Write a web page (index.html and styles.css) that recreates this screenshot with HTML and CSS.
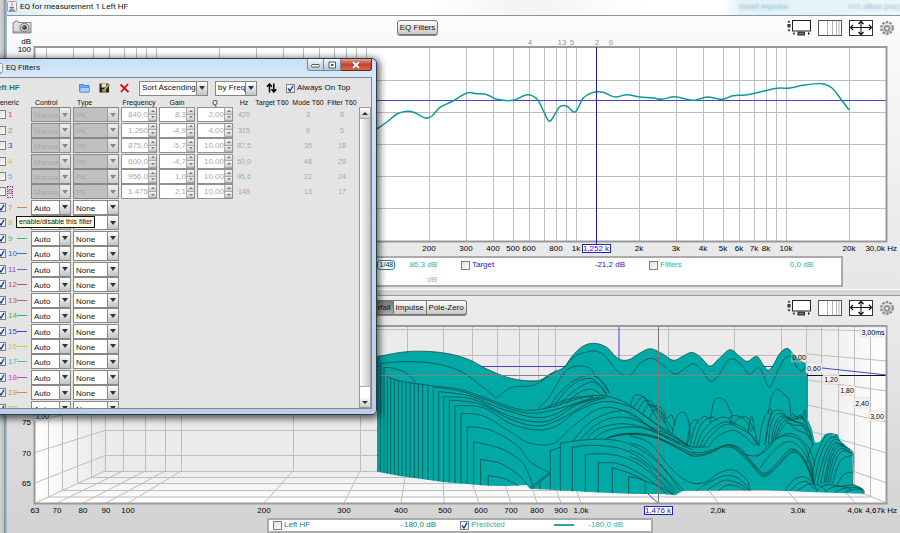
FILE: index.html
```html
<!DOCTYPE html>
<html lang="en">
<head>
    <meta charset="UTF-8">
    <meta name="viewport" content="width=device-width, initial-scale=1.0">
    <title>EQ for measurement 1 Left HF</title>
    <link rel="stylesheet" href="styles.css">
</head>
<body>
    <svg class="symbols" aria-hidden="true">
        <defs>
            <linearGradient id="metal" x1="0" y1="0" x2="0" y2="1">
                <stop offset="0" stop-color="#f4f4f4"/>
                <stop offset="1" stop-color="#a8a8a8"/>
            </linearGradient>
            <linearGradient id="wall-left"><stop offset="0" stop-color="#fff"/><stop offset="1" stop-color="#e8e8e8"/></linearGradient>
            <linearGradient id="wall-right"><stop offset="0" stop-color="#e8e8e8"/><stop offset="1" stop-color="#fff"/></linearGradient>
            <linearGradient id="floor" x1="0" y1="0" x2="0" y2="1"><stop offset="0" stop-color="#ececec"/><stop offset="1" stop-color="#fff"/></linearGradient>
            <symbol id="java" viewBox="0 0 10 11">
                <rect x=".5" y=".5" width="9" height="10" rx="1" fill="#f3f1ee" stroke="#9aa3ab"/>
                <path d="M5.5 1.5C3.5 3 6.5 3.5 4.7 5.5" fill="none" stroke="#d8672b"/>
                <path d="M2.5 6.5h4.5M3 8h3.5M2 9.3h6" stroke="#4f7495" fill="none"/>
            </symbol>
            <symbol id="camera" viewBox="0 0 20 14">
                <path d="M1 2.5h2V1h3v1.500h13v10.500H1z" fill="url(#metal)" stroke="#8a8a8a"/>
                <rect x="2" y="4" width="5" height="7" fill="#ddd"/>
                <circle cx="12.500" cy="7.500" r="4.300" fill="#cfcfcf" stroke="#777"/>
                <circle cx="12.500" cy="7.500" r="2.200" fill="#333"/>
                <circle cx="12" cy="7" r=".8" fill="#bbb"/>
            </symbol>
            <symbol id="scrollbars" viewBox="0 0 24 16">
                <rect x="5.500" y=".5" width="18" height="10.500" fill="#fff" stroke="#222"/>
                <path d="M.5 2.500L2 .5 3.500 2.500zM.5 9.500L2 11.500 3.500 9.500z" fill="#111"/>
                <rect x=".5" y="4" width="3" height="3.500" fill="#333"/>
                <path d="M7.500 12l-2 1.500 2 1.500zM21 12l2 1.500-2 1.500z" fill="#111"/>
                <rect x="11" y="12.200" width="6.500" height="2.800" fill="#777" stroke="#222"/>
            </symbol>
            <symbol id="gridlines" viewBox="0 0 24 16">
                <rect x=".5" y=".5" width="23" height="15" fill="#fff" stroke="#555"/>
                <path d="M9.500 1v14M14.500 1v14M18.500 1v14M21 1v14" stroke="#b5b5b5" fill="none"/>
            </symbol>
            <symbol id="limits" viewBox="0 0 24 16">
                <rect x=".5" y=".5" width="23" height="15" fill="#fff" stroke="#333"/>
                <path d="M1.500 7.500h21M12 1.500v13" stroke="#111" fill="none"/>
                <path d="M4 5L1.500 7.500 4 10M20 5l2.500 2.500L20 10M9.500 4L12 1.500 14.500 4M9.500 12l2.500 2.500 2.500-2.500" fill="none" stroke="#111" stroke-width="1.300"/>
            </symbol>
            <symbol id="gear" viewBox="0 0 14 14">
                <circle cx="7" cy="7" r="5.900" fill="none" stroke="#808080" stroke-width="2" stroke-dasharray="2.400 1.310"/>
                <circle cx="7" cy="7" r="5.300" fill="#b4b4b4"/>
                <circle cx="7" cy="7" r="4.500" fill="url(#metal)"/>
                <circle cx="7" cy="7" r="2.600" fill="#9c9c9c" stroke="#7c7c7c" stroke-width=".7"/>
                <circle cx="7" cy="7.500" r="1.300" fill="#f2f2f2"/>
            </symbol>
        </defs>
    </svg>

    <div class="desktop">
        <main class="window">
            <header class="title">
                <svg class="icon-java"><use href="#java"/></svg>
                <h1>EQ for measurement 1 Left HF</h1>
                <div class="ghost"><span>Invert impulse</span><span>t=0 offset (ms)</span></div>
            </header>

            <section class="panel panel-spl">
                <div class="toolbar">
                    <button class="tool camera" aria-label="Capture graph"><svg><use href="#camera"/></svg></button>
                    <div class="tabs"><button>EQ Filters</button></div>
                    <div class="tools">
                        <button class="tool" aria-label="Scrollbars"><svg><use href="#scrollbars"/></svg></button>
                        <button class="tool" aria-label="Frequency axis"><svg><use href="#gridlines"/></svg></button>
                        <button class="tool" aria-label="Graph limits"><svg><use href="#limits"/></svg></button>
                        <button class="tool gear" aria-label="Graph controls"><svg><use href="#gear"/></svg></button>
                    </div>
                </div>
                <svg class="chart" viewBox="7 36 893 218">
                    <rect x="34" y="47" width="853" height="194" fill="#fff"/>
                    <g id="spl-grid" class="grid"></g>
                    <path d="M34 100.500H887" class="target"/>
                    <path id="spl-curve" class="trace"/>
                    <path d="M34.500 47V241.500H886.500V47z" class="frame"/>
                    <path d="M596.500 47V244" class="cursor"/>
                    <g class="markers">
                        <text x="530" y="45">4</text><text x="562" y="45">13</text><text x="572" y="45">5</text><text x="597" y="45">2</text><text x="611" y="45">6</text>
                    </g>
                    <g id="spl-labels" class="axis"></g>
                    <g class="axis axis-y"><text x="31" y="44">dB</text><text x="31" y="52">100</text></g>
                    <rect x="582.500" y="244.500" width="28" height="8" class="readout"/>
                    <text x="596" y="251" class="readout-text">1,252 k</text>
                </svg>
                <div class="legend legend-spl">
                    <div class="entry teal">
                        <label><input type="checkbox" checked>Left HF</label>
                        <span class="smoothing">1/48</span>
                        <output>86,3 dB</output>
                        <output class="second">dB</output>
                    </div>
                    <div class="entry blue">
                        <label><input type="checkbox">Target</label>
                        <output>-21,2 dB</output>
                    </div>
                    <div class="entry teal">
                        <label><input type="checkbox">Filters</label>
                        <output>0,0 dB</output>
                    </div>
                </div>
            </section>

            <div class="splitter"></div>

            <section class="panel panel-waterfall">
                <div class="toolbar">
                    <button class="tool camera" aria-label="Capture graph"><svg><use href="#camera"/></svg></button>
                    <div class="tabs"><button class="pressed">Waterfall</button><button>Impulse</button><button>Pole-Zero</button></div>
                    <div class="tools">
                        <button class="tool" aria-label="Scrollbars"><svg><use href="#scrollbars"/></svg></button>
                        <button class="tool" aria-label="Frequency axis"><svg><use href="#gridlines"/></svg></button>
                        <button class="tool" aria-label="Graph limits"><svg><use href="#limits"/></svg></button>
                        <button class="tool gear" aria-label="Graph controls"><svg><use href="#gear"/></svg></button>
                    </div>
                </div>
                <svg class="chart" viewBox="7 316 893 200">
                    <rect x="34" y="326" width="853" height="177" fill="#ebebeb"/>
                    <path d="M35 326H105V471L35 503z" fill="url(#wall-left)"/>
                    <path d="M807 326H887V503L807 471z" fill="url(#wall-right)"/>
                    <path d="M105 471H807L887 503H35z" fill="url(#floor)"/>
                    <g id="room" class="grid"></g>
                    <path d="M360 366.500H807M822 368L887 375" class="target"/>
                    <path d="M619 326V360" class="target"/>
                    <g id="slices" class="slices" transform="translate(360 290) scale(.3333)"></g>
                    <path d="M34 375.500H807" stroke="#8c7f7f" fill="none"/>
                    <path d="M807 375.500H887" stroke="#111" fill="none"/>
                    <path d="M658.500 326V503" stroke="#777" fill="none"/>
                    <path d="M648 494L658 503" class="target"/>
                    <path d="M34.500 326V503.500H886.500V326z" class="frame"/>
                    <g id="times" class="times"></g>
                    <g id="wf-labels" class="axis"></g>
                    <g class="axis axis-y"><text x="31" y="425">75</text><text x="31" y="456">70</text><text x="31" y="486">65</text></g>
                    <rect x="644.500" y="506.500" width="28" height="8" class="readout"/>
                    <text x="658" y="513" class="readout-text">1,476 k</text>
                </svg>
                <div class="legend legend-waterfall">
                    <div class="entry dark-teal">
                        <label><input type="checkbox">Left HF</label>
                        <output>-180,0 dB</output>
                    </div>
                    <div class="entry teal">
                        <label><input type="checkbox" checked>Predicted</label>
                        <i class="line"></i>
                        <output>-180,0 dB</output>
                    </div>
                </div>
            </section>
        </main>

        <div class="dialog" role="dialog" aria-labelledby="dialog-title">
            <header class="dialog-title">
                <svg class="icon-java"><use href="#java"/></svg>
                <h2 id="dialog-title">EQ Filters</h2>
                <div class="window-buttons">
                    <button aria-label="Minimize"><svg viewBox="0 0 10 8"><rect x=".5" y="3.500" width="8" height="2.500" rx="1" fill="#fff" stroke="#555"/></svg></button>
                    <button aria-label="Maximize"><svg viewBox="0 0 10 8"><path d="M2 1h6.500v6H2z" fill="#fff" stroke="#555"/><rect x="4" y="3" width="2.500" height="2" fill="#555"/></svg></button>
                    <button class="close" aria-label="Close"><svg viewBox="0 0 10 8"><path d="M2 1l6 6M8 1L2 7" stroke="#555" stroke-width="3"/><path d="M2 1l6 6M8 1L2 7" stroke="#fff" stroke-width="1.800"/></svg></button>
                </div>
            </header>
            <div class="dialog-body">
                <div class="filter-tools">
                    <strong>Left HF</strong>
                    <button aria-label="Open filters"><svg viewBox="0 0 11 10"><path d="M.5 9V1.500h4l1 1h4.500V9z" fill="#6fa8ea" stroke="#4d87cf"/><path d="M.5 9l.8-4.500h9.200L10 9z" fill="#a9d0fb" stroke="#5d98dd"/></svg></button>
                    <button aria-label="Save filters"><svg viewBox="0 0 11 10"><path d="M.5.5h8.500l1 1v8H.5z" fill="#222"/><path d="M2.500.5h5v4h-5z" fill="#ddd"/><path d="M3 9.500V6h4v3.500z" fill="#999"/><path d="M3 8.500L9 1l1.500 1L5 9z" fill="#e3bd38" stroke="#5b4a12" stroke-width=".6"/></svg></button>
                    <button aria-label="Delete filters"><svg viewBox="0 0 11 10"><path d="M1.500 1.500l8 7.500M9 1L2 9" stroke="#cc1010" stroke-width="1.800" fill="none"/></svg></button>
                    <div class="sorting">
                        <select class="sort-order" aria-label="Sort order"><option>Sort Ascending</option></select>
                        <select class="sort-key" aria-label="Sort key"><option>by Freq</option></select>
                    </div>
                    <button aria-label="Sort"><svg viewBox="0 0 11 10"><path d="M3.500 9.500V2M1 3.800L3.500 1 6 3.800M7.800.5V8M5.500 6.200L7.800 9l2.500-2.800" stroke="#000" stroke-width="1.500" fill="none"/></svg></button>
                    <label><input type="checkbox" checked>Always On Top</label>
                </div>
                <div class="filter-area">
                    <table class="filters">
                        <thead>
                            <tr><th>Generic</th><th>Control</th><th>Type</th><th>Frequency</th><th>Gain</th><th>Q</th><th>Hz</th><th>Target T60</th><th>Mode T60</th><th>Filter T60</th></tr>
                        </thead>
                        <tbody id="filters"></tbody>
                    </table>
                    <div class="scrollbar">
                        <button class="up" aria-label="Scroll up"></button>
                        <div class="thumb"></div>
                        <button class="down" aria-label="Scroll down"></button>
                    </div>
                </div>
            </div>
        </div>
        <div class="tooltip" role="tooltip">enable/disable this filter</div>
    </div>
    <script src="script.js"></script>
</body>
</html>
```
FILE: styles.css
```css
* {
    box-sizing: border-box;
}

body {
    margin: 0;
    font-family: "Liberation Sans", Arial, sans-serif;
    font-size: 8px;
    line-height: 10px;
    color: #111;
    background: #ddd;
}

button, select, input {
    font: inherit;
    color: inherit;
    margin: 0;
    padding: 0;
}

.symbols {
    position: absolute;
    width: 0;
    height: 0;
}

.desktop {
    position: relative;
    min-height: 100vh;
    overflow: hidden;
    padding-left: 7px;
    background: linear-gradient(90deg, #d4d4d4 0, #b9bcc0 4px, #5f7183 5px, #c6dcf0 6px, #8f9aa5 7px);
}

.window {
    min-height: 100vh;
    display: flex;
    flex-direction: column;
    background: #e8e8e8;
}

.title {
    height: 16px;
    display: flex;
    align-items: center;
    gap: 3px;
    padding-bottom: 2px;
    border-bottom: 1px solid #8a9693;
    background: linear-gradient(90deg, #d9ecf6 0, #fff 80px, #fff 420px, #f1f3f4 520px, #fff 640px, #fff 715px, #e0f1f7 735px, #eaf6fa 100%);
}

.icon-java {
    width: 10px;
    height: 11px;
    flex: none;
}

h1, h2 {
    margin: 0;
    font: 8px/12px Roboto, "Open Sans", sans-serif;
}

.ghost {
    margin-left: auto;
    display: flex;
    gap: 60px;
    color: #5089a8;
    filter: blur(1px);
    opacity: .6;
}

.panel-spl {
    background: linear-gradient(#fcfcfc, #e6e6e6);
    padding-bottom: 2px;
}

.panel-waterfall {
    flex: 1;
    background: linear-gradient(#ececec, #d2d2d2);
}

.toolbar {
    height: 20px;
    display: flex;
    align-items: flex-start;
    padding: 4px 6px 0 5px;
}

.tool {
    border: 0;
    background: none;
    width: 24px;
    height: 16px;
}

.tool svg {
    display: block;
    width: 100%;
    height: 100%;
}

.camera {
    width: 20px;
    height: 14px;
    margin-right: 16px;
}

.gear {
    width: 14px;
    height: 14px;
}

.tools {
    display: flex;
    align-items: center;
    gap: 7px;
    margin-left: auto;
}

.tabs {
    display: flex;
    margin-left: auto;
}

.tabs button {
    height: 15px;
    padding: 0 2px;
    border: 1px solid #777;
    border-left-width: 0;
    background: linear-gradient(#fdfdfd, #c9c9c9);
    box-shadow: 0 1px 0 #888;
}

.tabs button:first-child {
    border-left-width: 1px;
    border-radius: 3px 0 0 3px;
}

.tabs button:last-child {
    border-radius: 0 3px 3px 0;
}

.tabs button:only-child {
    border-radius: 3px;
}

.tabs .pressed {
    background: linear-gradient(#777, #aaa);
}

.panel-waterfall .tabs {
    margin-right: 12px;
}

.chart {
    display: block;
    width: 100%;
    height: auto;
    font-size: 8px;
}

.grid {
    stroke: #bdbdbd;
    fill: none;
}

.frame {
    fill: none;
    stroke: #999;
    stroke-width: 2;
}

.target {
    stroke: #4646cc;
    fill: none;
}

.cursor {
    stroke: #1c1ca8;
}

.trace {
    stroke: #0d9a9a;
    stroke-width: 1.5;
    fill: none;
}

.axis text, .markers text, .times text, .readout-text {
    text-anchor: middle;
    font-size: 8px;
}

.axis .end, .axis-y text {
    text-anchor: end;
}

.markers {
    fill: #999;
}

.readout {
    fill: #fff;
    stroke: #2020c0;
}

.readout-text {
    fill: #2020c0;
}

.times rect {
    fill: #f6f6f6;
    fill-opacity: .85;
    stroke: #ccc;
    stroke-width: .5;
}

.times .clear rect {
    fill-opacity: .3;
    stroke: none;
}

.times text {
    font-size: 7px;
}

.slices {
    stroke: #0f3b3a;
    stroke-width: 2;
    fill: none;
    stroke-linejoin: round;
}

.slices .body {
    fill: #00a8a6;
}

.legend {
    display: grid;
    margin-left: 260px;
    padding: 2px 4px;
    border: 2px solid #aaa;
    background: #fff;
}

.legend-spl {
    grid-template-columns: repeat(3, 1fr);
    height: 31px;
    margin-top: 2px;
    margin-right: 57px;
}

.legend-waterfall {
    grid-template-columns: repeat(2, 1fr);
    width: 386px;
    height: 15px;
    margin-top: 2px;
    padding: 0 4px;
}

.entry {
    display: grid;
    grid-template-columns: 1fr auto auto;
    align-content: start;
    column-gap: 14px;
    padding-right: 24px;
}

.entry output {
    text-align: right;
    grid-column: 3;
}

.entry .second {
    margin-top: 5px;
    color: #aaa;
}

.smoothing {
    width: 18px;
    border: 1px solid #168f8b;
    border-radius: 3px;
    color: #111;
    font-size: 7px;
    line-height: 8px;
    text-align: center;
}

.line {
    width: 20px;
    height: 2px;
    align-self: center;
    background: #2aa7a4;
}

.teal {
    color: #20b5ab;
}

.dark-teal {
    color: #128080;
}

.blue {
    color: #2222c8;
}

label {
    display: inline-flex;
    align-items: center;
    gap: 2px;
}

input[type="checkbox"] {
    appearance: none;
    flex: none;
    width: 9px;
    height: 9px;
    border: 1px solid #7d8085;
    background: linear-gradient(135deg, #ddd, #fff);
}

input[type="checkbox"]:checked {
    background: #eef4fb url("data:image/svg+xml,%3Csvg xmlns='http://www.w3.org/2000/svg' viewBox='0 0 7 7'%3E%3Cpath d='M1 3.500L3 6 6 .8' fill='none' stroke='%23203f8f' stroke-width='1.400'/%3E%3C/svg%3E") center / 7px 7px no-repeat;
}

.splitter {
    height: 7px;
    border-top: 1px solid #fff;
    border-bottom: 1px solid #999;
    background: #d6d6d6;
}

/* floating filter window */
.dialog {
    position: absolute;
    left: -8px;
    top: 58px;
    width: 385px;
    border: 1px solid #2f3b46;
    border-radius: 5px;
    padding: 0 4px 5px;
    background: linear-gradient(#c6def6, #d9e9f9 18px, #c3daf0 100px, #b9cfe6);
    box-shadow: 1px 2px 7px 2px rgba(0, 0, 0, .6);
}

.dialog-title {
    height: 18px;
    display: flex;
    align-items: center;
    gap: 3px;
}

.dialog-title .icon-java {
    margin-left: -4px;
}

.window-buttons {
    display: flex;
    align-self: flex-start;
    margin-left: auto;
}

.window-buttons button {
    width: 17px;
    height: 12px;
    border: 1px solid #71879d;
    border-top: 0;
    border-left-width: 0;
    background: linear-gradient(#f1f7fc, #b6cadf);
    line-height: 0;
}

.window-buttons button:first-child {
    border-left-width: 1px;
    border-radius: 0 0 0 3px;
}

.window-buttons .close {
    width: 31px;
    border-color: #6d2019;
    border-radius: 0 0 3px 0;
    background: linear-gradient(#e2a493, #c5412c 50%, #d96a4a);
}

.window-buttons svg {
    width: 10px;
    height: 8px;
}

.dialog-body {
    border: 1px solid #7d8894;
    border-width: 1px 1px 1px 0;
    background: #e4e4e4;
}

.filter-tools {
    height: 20px;
    display: flex;
    align-items: center;
    gap: 9px;
}

.filter-tools strong {
    width: 78px;
    margin-left: -5px;
    color: #128080;
    flex: none;
}

.filter-tools button {
    width: 11px;
    height: 10px;
    border: 0;
    background: none;
    line-height: 0;
}

.sorting {
    display: flex;
    gap: 7px;
}

select {
    appearance: none;
    height: 15px;
    padding: 0 2px;
    border: 1px solid #888;
    border-radius: 0;
    background:
        url("data:image/svg+xml,%3Csvg xmlns='http://www.w3.org/2000/svg' viewBox='0 0 6 4'%3E%3Cpath d='M0 0h6L3 4z' fill='%23333'/%3E%3C/svg%3E") right 2px center / 6px 4px no-repeat,
        linear-gradient(#888, #888) right 10px top / 1px 100% no-repeat,
        linear-gradient(#fff, #c4c4c4) right / 10px 100% no-repeat,
        #fff;
}

select:disabled {
    opacity: 1;
    color: #a9a9a9;
    background:
        url("data:image/svg+xml,%3Csvg xmlns='http://www.w3.org/2000/svg' viewBox='0 0 6 4'%3E%3Cpath d='M0 0h6L3 4z' fill='%23888'/%3E%3C/svg%3E") right 2px center / 6px 4px no-repeat,
        linear-gradient(#999, #999) right 10px top / 1px 100% no-repeat,
        linear-gradient(#eee, #ccc) right / 10px 100% no-repeat,
        #c0c0c0;
}

.sort-order {
    width: 69px;
}

.sort-key {
    width: 42px;
}

.filter-area {
    display: flex;
    gap: 2px;
    height: 310px;
    overflow: hidden;
}

.filters, .filters thead {
    display: block;
}

.filters tr {
    display: grid;
    grid-template-columns: 32px 40px 46px 36px 36px 36px 18px 34px 34px 30px;
    column-gap: 2px;
    align-items: center;
}

.filters th, .filters td {
    padding: 0;
    font-weight: normal;
    text-align: center;
    white-space: nowrap;
}

.filters thead {
    height: 9px;
}

.filters th {
    display: flex;
    justify-content: center;
    font-size: 7px;
    line-height: 9px;
}

.filters th:first-child {
    justify-content: flex-end;
    padding-right: 10px;
}

.filters th:nth-child(2), .filters th:nth-child(3) {
    justify-content: flex-start;
    padding-left: 4px;
}

.filters tbody {
    display: grid;
    grid-auto-rows: 1fr;
    height: 309px;
    color: #a8a8a8;
}

.filters td {
    height: 15px;
    line-height: 15px;
}

.filters td:nth-child(n+7) {
    font-size: 7px;
}

.filters td:first-child {
    display: flex;
    align-items: center;
}

.filters td label {
    width: 20px;
}

.filters td select {
    display: block;
    width: 100%;
}

.filters td select:enabled {
    color: #111;
}

.filters i {
    width: 10px;
    height: 1px;
    background: currentColor;
}

.filters .focused {
    line-height: 10px;
    outline: 1px dotted #803080;
}

.spinner {
    display: grid;
    grid-template-columns: 1fr 8px;
    grid-template-rows: 1fr 1fr;
    height: 15px;
    border: 1px solid #909090;
    background: #fff;
}

.spinner input {
    grid-row: 1 / 3;
    width: 100%;
    min-width: 0;
    border: 0;
    background: none;
    text-align: right;
    color: #aaa;
}

.spinner button {
    border: 1px solid #aaa;
    border-width: 0 0 1px 1px;
    background: linear-gradient(#f4f4f4, #ccc);
    display: grid;
    place-items: center;
}

.spinner button::after {
    content: "";
    border: 2px solid transparent;
    border-top-width: 0;
    border-bottom-color: #777;
}

.spinner button:last-child::after {
    transform: rotate(180deg);
}

.scrollbar {
    width: 12px;
    margin-top: 9px;
    display: flex;
    flex-direction: column;
    border: 1px solid #999;
    background: #fff;
}

.scrollbar button {
    height: 10px;
    border: 0;
    background: linear-gradient(#fff, #ccc);
    display: grid;
    place-items: center;
}

.scrollbar button::after {
    content: "";
    border: 3px solid transparent;
    border-top-width: 0;
    border-bottom-color: #333;
}

.scrollbar .down::after {
    transform: rotate(180deg);
}

.thumb {
    flex: 1;
    margin-bottom: 10px;
    border: 1px solid #aaa;
    border-width: 1px 0;
    background: linear-gradient(90deg, #fff, #c8c8c8);
}

.tooltip {
    position: absolute;
    left: 16px;
    top: 216px;
    padding: 0 2px;
    border: 1px solid #111;
    background: #ffffe1;
    font-size: 7px;
}
```
FILE: script.js
```javascript
const SVG = 'http://www.w3.org/2000/svg';

function add(parent, name, attrs, text) {
    const el = document.createElementNS(SVG, name);
    for (const key in attrs) el.setAttribute(key, attrs[key]);
    if (text) el.textContent = text;
    parent.appendChild(el);
    return el;
}

// Smooth curve through a flat list of x,y values
function smooth(list) {
    const p = [];
    for (let i = 0; i < list.length; i += 2) p.push([list[i], list[i + 1]]);
    let d = `M${p[0]}`;
    for (let i = 0; i < p.length - 1; i++) {
        const a = p[i - 1] || p[i], b = p[i], c = p[i + 1], e = p[i + 2] || c;
        d += `C${b[0] + (c[0] - a[0]) / 6},${b[1] + (c[1] - a[1]) / 6} ${c[0] - (e[0] - b[0]) / 6},${c[1] - (e[1] - b[1]) / 6} ${c}`;
    }
    return d;
}

// ---- SPL graph ----
const splGrid = document.getElementById('spl-grid');
const splX = f => 429.3 + 210 * Math.log10(f / 200);
for (let decade = 1; decade <= 10000; decade *= 10) {
    for (let n = 1; n < 10; n++) {
        const x = Math.round(splX(n * decade)) + 0.5;
        if (x > 35 && x < 886) add(splGrid, 'path', { d: `M${x} 47V241` });
    }
}
for (let y = 80.5; y < 240; y += 32) add(splGrid, 'path', { d: `M34 ${y}H887` });

const splLabels = document.getElementById('spl-labels');
[[200, '200'], [300, '300'], [400, '400'], [500, '500'], [600, '600'], [800, '800'], [1000, '1k'], [2000, '2k'], [3000, '3k'],
 [4000, '4k'], [5000, '5k'], [6000, '6k'], [7000, '7k'], [8000, '8k'], [10000, '10k'], [20000, '20k']].forEach(([f, t]) => {
    add(splLabels, 'text', { x: Math.round(splX(f)), y: 251 }, t);
});
add(splLabels, 'text', { x: 897, y: 251, class: 'end' }, '30,0k Hz');

document.getElementById('spl-curve').setAttribute('d', smooth([
    377, 129, 387, 122, 397, 114, 407, 111.3, 415, 112.7, 425, 118, 432, 116, 440, 107.3, 453, 101, 467, 93, 477, 93.7,
    487, 94.7, 497, 99.3, 513, 100.3, 527, 94.7, 537, 99, 543, 110, 549.3, 121.3, 555, 114, 560, 106.7, 567, 106.3,
    574, 112.3, 578, 108.3, 583, 98.3, 592, 92.7, 603, 92.3, 615, 97, 627, 94.7, 640, 97, 652, 97.7, 662, 99.3, 675, 96.7,
    693, 100.3, 707, 97, 722, 99.3, 733, 95.7, 745, 95, 763, 91.3, 777, 88.3, 790, 88, 803, 85.3, 822, 83.7, 832, 88,
    841, 99.3, 849, 110
]));

// ---- Waterfall room ----
const room = document.getElementById('room');
[105.5, 123.5, 145.5, 165.5, 181.5, 293.5, 360.5, 407.5, 443.5, 472.5, 497.5, 519.5, 538.5, 555.5, 668.5, 734.5, 781.5, 806.5]
    .forEach(x => add(room, 'path', { d: `M${x} 326V471` }));
[329.5, 355.5, 380.5, 405.5, 430.5, 455.5, 471.5].forEach(y => add(room, 'path', { d: `M105 ${y}H807` }));
[[123, 57], [145, 83], [165, 106], [181, 128], [293, 264], [360, 344], [406, 401], [443, 444], [468, 479], [500, 511],
 [527, 537], [549, 561], [569, 581], [695, 718], [770, 798], [828, 855]]
    .forEach(([a, b]) => add(room, 'path', { d: `M${a} 471L${b} 503` }));
[[48.5, 497, 870.5], [62.5, 490.5, 854.5], [77.5, 483.5, 838.5], [91.5, 477.5, 821.5]]
    .forEach(([l, y, r]) => add(room, 'path', { d: `M${l} 326V${y}H${r}V326` }));
add(room, 'path', { d: 'M35 503L105 471M35 483L105 455.5M35 452.5L105 430.5M35 421L105 405.5M807 329.500L887 331M807 354L887 361M807 380L887 391M807 405L887 422M807 430L887 453M807 455L887 483M807 471L887 503' });

const wfLabels = document.getElementById('wf-labels');
[[35, '63'], [57, '70'], [83, '80'], [106, '90'], [128, '100'], [264, '200'], [344, '300'], [401, '400'], [445, '500'], [481, '600'],
 [511, '700'], [537, '800'], [561, '900'], [581, '1,0k'], [718, '2,0k'], [798, '3,0k'], [855, '4,0k']]
    .forEach(([x, t]) => add(wfLabels, 'text', { x, y: 513 }, t));
add(wfLabels, 'text', { x: 897, y: 513, class: 'end' }, '4,67k Hz');

const times = document.getElementById('times');
[[42, 416, '3,00'], [873, 332, '3,00ms'], [799, 357.5, '0,00'], [814, 368, '0,60'], [831, 379, '1,20'], [847, 390.500, '1,80'], [862, 403, '2,40'], [877, 416, '3,00']]
    .forEach(([x, y, t], i) => {
        const g = add(times, 'g', { class: i === 2 ? 'clear' : '' });
        const w = i === 1 ? 26 : 16;
        add(g, 'rect', { x: x - w / 2, y: y - 5, width: w, height: 10 });
        add(g, 'text', { x, y: y + 2.5 }, t);
    });

// ---- Waterfall slices, three units to the pixel ----
const slices = document.getElementById('slices');
const ridge = [53, 200, 130, 186, 200, 184, 270, 192, 330, 210, 370, 232, 430, 258, 480, 270, 535, 272, 570, 252, 612, 232, 635, 200,
    670, 168, 705, 160, 740, 172, 765, 198, 785, 210, 810, 208, 835, 192, 870, 176, 905, 190, 940, 211, 970, 198, 995, 187,
    1020, 200, 1050, 228, 1075, 208, 1110, 179, 1140, 200, 1162, 214, 1190, 199, 1210, 225, 1225, 241, 1240, 225, 1260, 190,
    1282, 175, 1302, 195, 1322, 213, 1342, 222];
add(slices, 'path', {
    class: 'body', stroke: 'none',
    d: smooth(ridge) + 'V385L1355 415L1365 458L1380 455L1395 432L1410 430L1422 434L1432 432L1440 450L1462 472L1478 486V582L1500 590L1510 597L1512 611' +
        'L1440 609L1370 607L1210 600L970 602L945 616L910 612L855 612L810 611L700 607L570 599L510 596L500 585L440 588L385 587L250 576L120 558L53 545z'
});

// slices cut off by the left side: x, foot, then the curve
[[53, 545, [200]], [62, 547, [220, 130, 215, 220, 220, 300, 243, 360, 285, 410, 325]], [72, 549, [232, 100, 235, 140, 250, 167, 278]],
 [82, 551, [260]], [92, 553, [264]], [103, 555, [270]], [115, 557, [273]], [126, 559, [275]], [138, 560, [277]], [150, 562, [278]],
 [163, 564, [280]], [175, 565, [282]], [188, 567, [285]], [204, 570, [287]],
 [220, 572, [291, 300, 303, 380, 330, 450, 357, 520, 370, 600, 355, 700, 322]],
 [236, 574, [305, 330, 318, 420, 355, 520, 382, 580, 375, 640, 345, 720, 320]],
 [251, 576, [320, 340, 328, 440, 375, 520, 395, 580, 388, 650, 345, 735, 320]],
 [268, 578, [330, 360, 342, 450, 387, 530, 408, 600, 388, 680, 342, 740, 322]],
 [285, 579, [347, 370, 353, 450, 400, 530, 420, 590, 408, 650, 364, 730, 335, 810, 350, 870, 390, 930, 435, 985, 468]],
 [303, 580, [370, 370, 378, 450, 425, 500, 456, 550, 465, 590, 455, 640, 408, 720, 355, 790, 362, 860, 405, 930, 450, 1000, 480]],
 [322, 582, [410, 390, 420, 470, 465, 510, 515, 568, 548]],
 [341, 584, [455, 420, 475, 480, 510, 505, 550, 518, 582]],
 [362, 586, [508, 420, 520, 470, 550, 500, 583]],
 [385, 587, [557, 430, 565, 475, 587]],
 [571, 600, [482, 601, 472]],
 [601, 603, [460, 660, 451, 740, 448, 810, 463, 880, 505, 930, 560, 960, 602]],
 [637, 605, [472, 700, 466, 790, 478, 860, 520, 915, 570, 945, 608]],
 [676, 606, [493, 740, 492, 800, 505, 860, 540, 935, 612]],
 [715, 608, [518, 770, 520, 820, 540, 870, 570, 920, 612]],
 [757, 610, [533, 810, 550, 856, 573]],
 [806, 611, [560, 830, 564, 856, 573]],
 [856, 612, [573, 890, 586, 940, 612]]
].forEach(([x, foot, c]) => {
    const d = smooth([x, ...c]);
    add(slices, 'path', { d: `M${x} ${foot}V${c[0]}` + (c.length > 1 ? d.slice(d.indexOf('C')) : '') });
});

[
    ridge,
    [82, 260, 120, 273, 220, 288, 300, 298, 380, 325, 450, 351, 510, 361, 580, 350, 640, 330, 700, 317, 740, 318, 790, 335, 830, 360, 880, 395, 930, 428, 985, 466],
    [410, 325, 430, 308, 460, 291, 520, 286, 560, 262, 590, 240],
    [535, 355, 565, 325, 595, 275, 620, 240, 655, 228, 690, 235, 710, 262, 735, 283, 748, 310],
    [612, 232, 640, 202, 665, 190, 705, 183, 735, 198, 765, 235, 790, 255, 815, 252, 840, 220, 875, 205, 910, 225, 945, 252, 975, 235, 1000, 221, 1025, 240, 1050, 273, 1075, 258,
        1100, 215, 1120, 207, 1145, 225, 1168, 253, 1195, 232, 1210, 255, 1228, 292, 1250, 250, 1272, 208, 1295, 200, 1310, 230, 1325, 243, 1342, 222],
    [570, 350, 590, 318, 630, 280, 680, 256, 715, 265, 745, 305],
    [585, 348, 610, 310, 650, 276, 690, 265, 720, 285, 742, 315],
    [600, 345, 630, 312, 670, 285, 700, 276, 725, 295, 740, 316],
    [620, 340, 650, 312, 690, 297, 715, 308, 725, 318],
    [550, 356, 600, 336, 650, 322, 700, 318],
    [640, 452, 680, 405, 730, 375, 790, 362, 830, 380, 880, 420],
    [660, 450, 700, 410, 750, 385, 810, 384, 870, 410, 940, 440, 990, 470],
    [680, 448, 710, 418, 770, 402, 820, 405, 890, 425, 960, 460],
    [700, 448, 735, 424, 790, 412, 850, 415, 930, 445, 990, 470, 1040, 470],
    [735, 448, 770, 434, 820, 430, 880, 438, 950, 468, 1000, 488, 1050, 482, 1100, 464, 1140, 475, 1175, 515, 1212, 550, 1250, 520, 1290, 478, 1320, 490, 1345, 530, 1363, 580],
    [740, 445, 780, 436, 830, 434, 890, 445, 950, 473, 1000, 494, 1050, 486, 1100, 466, 1140, 480, 1175, 520, 1212, 555, 1255, 522, 1295, 482, 1325, 498, 1345, 535, 1361, 582],
    [745, 442, 800, 432, 850, 433, 900, 447, 960, 478, 1000, 499, 1050, 490, 1090, 471, 1130, 480, 1175, 525, 1212, 560, 1255, 527, 1295, 488, 1325, 503, 1345, 540, 1361, 582],
    [810, 437, 870, 460, 920, 520, 960, 560, 1000, 580, 1040, 575, 1075, 550, 1120, 540, 1160, 570, 1170, 602],
    [810, 458, 860, 480, 920, 545, 965, 595, 970, 602],
    [810, 480, 850, 500, 900, 550, 950, 602],
    [810, 500, 850, 520, 900, 570, 940, 608],
    [1010, 602, 1050, 575, 1100, 556, 1140, 568, 1170, 602],
    [1040, 602, 1070, 582, 1100, 570, 1140, 582, 1165, 602],
    [1075, 602, 1100, 586, 1130, 588, 1155, 602],
    // small ridges on the right
    [812, 345, 820, 320, 835, 314, 855, 325, 870, 350, 885, 348, 905, 355, 920, 385, 935, 375, 945, 405],
    [822, 352, 840, 325, 855, 323, 870, 345, 885, 375, 900, 395],
    [835, 360, 850, 335, 870, 332, 885, 355, 900, 380, 915, 400],
    [850, 370, 865, 345, 885, 350, 905, 375, 930, 430],
    [870, 385, 880, 362, 900, 362, 915, 385, 940, 420],
    [935, 435, 950, 380, 970, 367, 985, 390, 990, 440, 978, 465],
    [980, 468, 990, 410, 1000, 392, 1010, 390, 1015, 400],
    [990, 468, 1005, 410, 1022, 385, 1040, 380, 1055, 400],
    [1000, 470, 1015, 420, 1035, 390, 1060, 382, 1075, 395],
    [1010, 470, 1025, 430, 1050, 400, 1080, 383, 1105, 385, 1120, 405],
    [1020, 470, 1035, 440, 1065, 410, 1100, 395, 1135, 405, 1165, 425, 1190, 465],
    [1030, 470, 1050, 440, 1080, 412, 1110, 402, 1145, 418, 1180, 440, 1195, 468],
    [1045, 472, 1065, 445, 1100, 425, 1125, 422, 1155, 440, 1185, 468],
    [1052, 388, 1060, 340, 1070, 325, 1090, 328, 1105, 350, 1116, 380, 1110, 402],
    [1105, 385, 1120, 376, 1140, 380, 1165, 385, 1180, 420],
    [1120, 400, 1140, 383, 1160, 395, 1175, 425],
    [1165, 425, 1172, 385, 1178, 385, 1185, 425, 1196, 468],
    [1197, 468, 1205, 410, 1220, 370, 1235, 360, 1225, 405, 1215, 465],
    [1225, 372, 1235, 320, 1252, 298, 1268, 310, 1285, 325, 1290, 350, 1292, 375],
    [1215, 465, 1225, 400, 1240, 365, 1265, 362, 1285, 385, 1320, 378, 1340, 400],
    [1225, 460, 1232, 405, 1250, 372, 1275, 375, 1290, 390, 1325, 385, 1345, 415, 1358, 460],
    [1235, 455, 1242, 410, 1260, 380, 1285, 382, 1305, 395, 1335, 405, 1355, 440],
    [1240, 450, 1250, 410, 1268, 385, 1290, 390, 1320, 400, 1345, 425],
    [1245, 448, 1258, 412, 1275, 392, 1300, 405, 1330, 410, 1350, 450],
    [1250, 446, 1265, 415, 1285, 400, 1310, 420, 1345, 435, 1358, 465],
    [1190, 500, 1220, 480, 1250, 445, 1290, 430, 1320, 445, 1350, 480, 1365, 530],
    [1110, 464, 1150, 492, 1195, 495, 1230, 460, 1270, 438, 1310, 445, 1340, 480, 1362, 560],
    [1200, 535, 1230, 495, 1270, 460, 1305, 460, 1340, 500, 1362, 570],
    [1290, 380, 1300, 372, 1312, 390], [1310, 388, 1322, 374, 1335, 392], [1328, 385, 1334, 360, 1338, 390],
    [1275, 602, 1300, 570, 1330, 560, 1355, 575, 1370, 600],
    [1290, 602, 1315, 580, 1340, 575, 1365, 598],
    [1310, 602, 1340, 585, 1360, 582, 1385, 590, 1400, 606],
    [1340, 520, 1350, 480, 1365, 458],
    [1355, 570, 1365, 510, 1380, 470, 1395, 440, 1412, 430, 1432, 436],
    [1363, 580, 1375, 520, 1390, 475, 1410, 445, 1432, 442],
    [1372, 582, 1385, 525, 1400, 480, 1420, 450, 1440, 452],
    [1382, 582, 1395, 520, 1408, 482, 1425, 458, 1455, 466],
    [1392, 580, 1402, 530, 1415, 485, 1435, 462, 1470, 480],
    [1397, 580, 1407, 530, 1420, 490, 1440, 468, 1478, 486, 1479, 540, 1478, 582],
    [1403, 580, 1413, 530, 1425, 495, 1445, 475, 1475, 490],
    [1410, 580, 1418, 540, 1432, 500, 1452, 482, 1478, 492],
    [1418, 580, 1428, 545, 1445, 508, 1478, 496],
    [1430, 590, 1445, 560, 1465, 548, 1480, 550],
    [1368, 606, 1385, 590, 1410, 584, 1440, 590, 1480, 585, 1510, 600],
    [1395, 607, 1410, 595, 1440, 588, 1475, 598],
    [1425, 608, 1445, 597, 1480, 592, 1510, 600, 1512, 611],
    [1455, 610, 1470, 600, 1500, 598, 1510, 606]
].forEach(c => add(slices, 'path', { d: smooth(c) }));
add(slices, 'path', { d: 'M1342 222V385M510 594L568 548M514 597L571 551M540 598V575' });

// ---- Filter table ----
const colours = ['#e05050', '#40c050', '#4040d0', '#e0c040', '#40c0d0', '#a040a0', '#e08040', '#a0c850', '#30c080', '#4070c0',
    '#9050d0', '#d04070', '#c06060', '#30c040', '#4040d0', '#c8c840', '#40c0c0', '#d040d0', '#d09040', '#90c850'];
const manual = [
    ['840,0', '8,3', '2,00', '420', '3', '8'],
    ['1.260', '-4,9', '4,00', '315', '9', '5'],
    ['875,0', '-5,7', '10,00', '87,5', '35', '18'],
    ['600,0', '-4,7', '10,00', '60,0', '48', '28'],
    ['956,0', '1,0', '10,00', '95,6', '22', '24'],
    ['1.475', '2,1', '10,00', '148', '13', '17']
];
const spinner = (label, v) => `<td><div class="spinner"><input type="text" aria-label="${label}" value="${v}" disabled>` +
    '<button aria-label="Increase" disabled></button><button aria-label="Decrease" disabled></button></div></td>';

document.getElementById('filters').innerHTML = colours.map((colour, i) => {
    const n = i + 1, m = manual[i], off = m ? 'disabled' : '';
    return `<tr><td style="color:${colour}"><label><input type="checkbox" ${m ? '' : 'checked'}><span class="${n === 6 ? 'focused' : ''}">${n}</span></label>${m ? '' : '<i></i>'}</td>
        <td><select aria-label="Control ${n}" ${off}><option>${m ? 'Manual' : 'Auto'}</option></select></td>
        <td><select aria-label="Type ${n}" ${off}><option>${m ? 'PK' : 'None'}</option></select></td>` +
        (m ? spinner('Frequency', m[0]) + spinner('Gain', m[1]) + spinner('Q', m[2]) +
            `<td>${m[3]}</td><td></td><td>${m[4]}</td><td>${m[5]}</td>` : '') + '</tr>';
}).join('');
```
